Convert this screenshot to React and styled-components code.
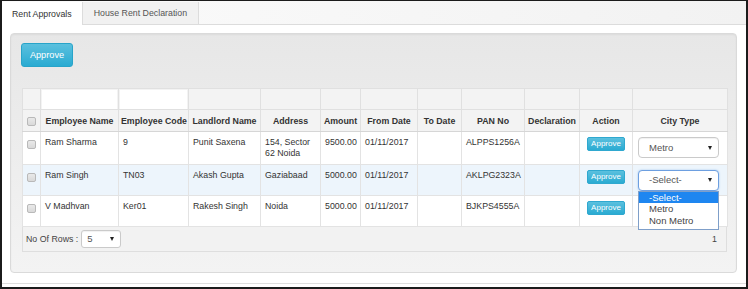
import React from 'react';
import styled, { createGlobalStyle, css } from 'styled-components';

const GlobalStyle = createGlobalStyle`
  body {
    margin: 0;
    font-family: "Liberation Sans", Arial, sans-serif;
    background: #fff;
  }
`;

const Frame = styled.div`
  width: 748px;
  height: 289px;
  box-sizing: border-box;
  border: 2px solid #1b1b1b;
  border-top-width: 1px;
  background: #fff;
  display: flex;
  flex-direction: column;
  color: #333;
`;

const TabBar = styled.div`
  height: 24px;
  box-sizing: border-box;
  display: flex;
  align-items: flex-end;
  border-bottom: 1px solid #dcdcdc;
  background: linear-gradient(to right, #fbfbfb, #f2f2f2);
`;

const Tab = styled.div`
  height: 22px;
  box-sizing: border-box;
  display: flex;
  align-items: center;
  padding: 0 ${({ $active }) => ($active ? 10 : 11)}px;
  font-size: 8.8px;
  border-right: 1px solid #dcdcdc;
  color: ${({ $active }) => ($active ? '#333' : '#555')};
  background: ${({ $active }) => ($active ? '#fff' : '#f1f1f1')};
  ${({ $active }) =>
    $active &&
    css`
      height: 23px;
      margin-bottom: -1px;
      position: relative;
    `}
`;

const Content = styled.div`
  padding: 8px 9px 0 8px;
  height: 250px;
  border-bottom: 1px solid #dedede;
`;

const Well = styled.div`
  height: 240px;
  box-sizing: border-box;
  border: 1px solid #dadada;
  border-radius: 4px;
  background: linear-gradient(to bottom, #e7e7e7, #f3f3f3);
  box-shadow: inset 0 1px 2px rgba(0, 0, 0, 0.05);
  padding: 9px 9px 0 11px;
`;

const Button = styled.button`
  font-family: inherit;
  color: #fff;
  border: 1px solid ${({ $small }) => ($small ? '#2fa8cf' : '#28a4c9')};
  border-radius: ${({ $small }) => ($small ? 2 : 3)}px;
  background: linear-gradient(to bottom, #5bc0de, #2aabd2);
  padding: 0;
  cursor: pointer;
  ${({ $small }) =>
    $small
      ? css`
          width: 38px;
          height: 14px;
          font-size: 8px;
          line-height: 12px;
        `
      : css`
          width: 52px;
          height: 24px;
          font-size: 9.2px;
          margin-left: -1px;
          margin-bottom: 21px;
          display: block;
        `}
`;

const Table = styled.table`
  width: 705px;
  table-layout: fixed;
  border-collapse: collapse;
  font-size: 8.8px;
  background: #fff;
`;

const FilterCell = styled.th`
  height: 20px;
  padding: 0;
  background: #f3f3f3;
  border: 1px solid #e0e0e0;
`;

const FilterInput = styled.div`
  height: 19px;
  margin: 0 1px;
  background: #fff;
`;

const HeadCell = styled.th`
  height: 21px;
  padding: 0 2px;
  background: #f3f3f3;
  border: 1px solid #e0e0e0;
  border-bottom-color: #d6d6d6;
  font-weight: bold;
  color: #333;
  text-align: center;
  white-space: nowrap;
`;

const Row = styled.tr`
  background: ${({ $hover }) => ($hover ? '#edf5fc' : '#fff')};
`;

const Cell = styled.td`
  padding: 5px 4px 4px 4px;
  border: 1px solid #e3e3e3;
  vertical-align: top;
  line-height: 11.3px;
  color: #333;
  ${({ $center }) => $center && 'text-align: center;'}
`;

const CheckCell = styled.td`
  padding: 7px 0 0 0;
  border: 1px solid #e3e3e3;
  vertical-align: top;
  text-align: center;
`;

const Check = styled.span`
  display: inline-block;
  width: 9px;
  height: 9px;
  box-sizing: border-box;
  border: 1px solid #b9b9b9;
  border-radius: 2px;
  background: linear-gradient(#e9e9e9, #d9d9d9);
  vertical-align: middle;
`;

const SelectWrap = styled.div`
  position: relative;
  width: 81px;
  height: 21px;
  margin-left: 1px;
`;

const Select = styled.div`
  box-sizing: border-box;
  height: ${({ $compact }) => ($compact ? 18 : 21)}px;
  width: ${({ $compact }) => ($compact ? 40 : 81)}px;
  display: flex;
  align-items: center;
  justify-content: space-between;
  padding: 0 6px 0 ${({ $compact }) => ($compact ? 5 : 10)}px;
  background: #fff;
  font-size: 9.5px;
  color: #555;
  border: 1px solid ${({ $focus }) => ($focus ? '#6d9fe0' : '#cacaca')};
  border-radius: ${({ $compact }) => ($compact ? 3 : 4)}px;
  box-shadow: ${({ $focus }) =>
    $focus ? '0 0 2px rgba(102, 160, 230, 0.6)' : 'inset 0 1px 1px rgba(0,0,0,0.06)'};
`;

const Caret = styled.span`
  width: 0;
  height: 0;
  border-left: 2.5px solid transparent;
  border-right: 2.5px solid transparent;
  border-top: 4px solid #222;
`;

const Options = styled.div`
  position: absolute;
  top: 100%;
  left: 0;
  width: 81px;
  box-sizing: border-box;
  border: 1px solid #7f9fc9;
  background: #fff;
  z-index: 2;
  font-size: 9.5px;
  padding-bottom: 3px;
`;

const Option = styled.div`
  height: 11.5px;
  line-height: 11.5px;
  padding-left: 10px;
  color: ${({ $selected }) => ($selected ? '#fff' : '#444')};
  background: ${({ $selected }) => ($selected ? '#1e86f0' : 'transparent')};
`;

const Footer = styled.div`
  width: 705px;
  box-sizing: border-box;
  height: 25px;
  display: flex;
  align-items: center;
  justify-content: space-between;
  padding: 0 9px 0 3px;
  background: #f2f2f2;
  border: 1px solid #dedede;
  border-top: none;
  font-size: 8.8px;
  color: #444;
`;

const RowsPicker = styled.div`
  display: flex;
  align-items: center;
  gap: 3px;
`;

const columns = [
  { key: 'check', width: 18 },
  { key: 'name', label: 'Employee Name', width: 78, filter: true },
  { key: 'code', label: 'Employee Code', width: 70, filter: true },
  { key: 'landlord', label: 'Landlord Name', width: 72 },
  { key: 'address', label: 'Address', width: 60 },
  { key: 'amount', label: 'Amount', width: 40 },
  { key: 'from', label: 'From Date', width: 57 },
  { key: 'to', label: 'To Date', width: 44 },
  { key: 'pan', label: 'PAN No', width: 63 },
  { key: 'decl', label: 'Declaration', width: 55 },
  { key: 'action', label: 'Action', width: 53 },
  { key: 'city', label: 'City Type', width: 95 },
];

// the third row's select sits under the open list, so it shows no value
const rows = [
  {
    name: 'Ram Sharma',
    code: '9',
    landlord: 'Punit Saxena',
    address: '154, Sector 62 Noida',
    amount: '9500.00',
    from: '01/11/2017',
    pan: 'ALPPS1256A',
    city: 'Metro',
  },
  {
    name: 'Ram Singh',
    code: 'TN03',
    landlord: 'Akash Gupta',
    address: 'Gaziabaad',
    amount: '5000.00',
    from: '01/11/2017',
    pan: 'AKLPG2323A',
    city: '-Select-',
    open: true,
  },
  {
    name: 'V Madhvan',
    code: 'Ker01',
    landlord: 'Rakesh Singh',
    address: 'Noida',
    amount: '5000.00',
    from: '01/11/2017',
    pan: 'BJKPS4555A',
    city: null,
  },
];

const cityOptions = ['-Select-', 'Metro', 'Non Metro'];

const CitySelect = ({ value, open }) => (
  <SelectWrap>
    {value && (
      <Select $focus={open}>
        <span>{value}</span>
        <Caret />
      </Select>
    )}
    {open && (
      <Options>
        {cityOptions.map((o) => (
          <Option key={o} $selected={o === value}>
            {o}
          </Option>
        ))}
      </Options>
    )}
  </SelectWrap>
);

export default function App() {
  return (
    <>
      <GlobalStyle />
      <Frame>
        <TabBar>
          <Tab $active>Rent Approvals</Tab>
          <Tab>House Rent Declaration</Tab>
        </TabBar>
        <Content>
          <Well>
            <Button>Approve</Button>
            <Table>
              <colgroup>
                {columns.map((c) => (
                  <col key={c.key} style={{ width: c.width }} />
                ))}
              </colgroup>
              <thead>
                <tr>
                  {columns.map((c) => (
                    <FilterCell key={c.key}>{c.filter && <FilterInput />}</FilterCell>
                  ))}
                </tr>
                <tr>
                  {columns.map((c) =>
                    c.key === 'check' ? (
                      <HeadCell key={c.key}>
                        <Check />
                      </HeadCell>
                    ) : (
                      <HeadCell key={c.key}>{c.label}</HeadCell>
                    )
                  )}
                </tr>
              </thead>
              <tbody>
                {rows.map((r, i) => (
                  <Row key={r.name} $hover={i === 1}>
                    <CheckCell>
                      <Check />
                    </CheckCell>
                    <Cell>{r.name}</Cell>
                    <Cell>{r.code}</Cell>
                    <Cell>{r.landlord}</Cell>
                    <Cell>{r.address}</Cell>
                    <Cell>{r.amount}</Cell>
                    <Cell>{r.from}</Cell>
                    <Cell />
                    <Cell>{r.pan}</Cell>
                    <Cell />
                    <Cell $center>
                      <Button $small>Approve</Button>
                    </Cell>
                    <Cell>
                      <CitySelect value={r.city} open={r.open} />
                    </Cell>
                  </Row>
                ))}
              </tbody>
            </Table>
            <Footer>
              <RowsPicker>
                No Of Rows :
                <Select $compact>
                  <span>5</span>
                  <Caret />
                </Select>
              </RowsPicker>
              <span>1</span>
            </Footer>
          </Well>
        </Content>
      </Frame>
    </>
  );
}
